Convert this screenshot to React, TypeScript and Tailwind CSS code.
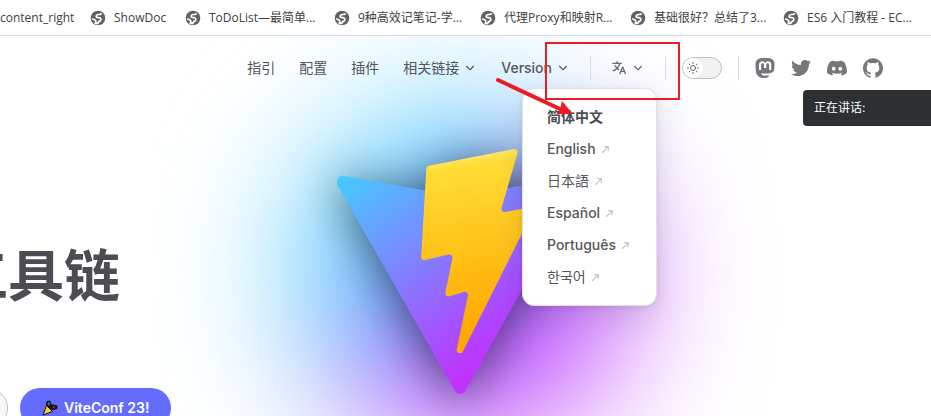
import { SiMastodon, SiDiscord, SiGithub } from "react-icons/si";
import { FaTwitter } from "react-icons/fa";

const bookmarks = [
  { label: "ShowDoc", width: "w-[95px]" },
  { label: "ToDoList—最简单...", width: "w-[149px]" },
  { label: "9种高效记笔记-学...", width: "w-[146px]" },
  { label: "代理Proxy和映射R...", width: "w-[150px]" },
  { label: "基础很好？总结了3...", width: "w-[153px]" },
  { label: "ES6 入门教程 - EC...", width: "w-[150px]" },
];

const languages = [
  { label: "English", weight: "font-medium" },
  { label: "日本語", weight: "font-normal" },
  { label: "Español", weight: "font-medium" },
  { label: "Português", weight: "font-medium" },
  { label: "한국어", weight: "font-normal" },
];

function Globe() {
  return (
    <svg viewBox="0 0 16 16" className="size-4 shrink-0" aria-hidden="true">
      <circle cx="8" cy="8" r="7.3" fill="#5f6368" />
      <path
        d="M11.6 3.2C11.2 4.4 10 4.6 8.8 4.5 7.4 4.4 6.2 5 6.2 6.2 6.2 7.4 7.2 7.6 8.6 7.6 10.2 7.6 11 8.6 10.8 9.9 10.6 11.2 9.4 11.2 8.6 11.8 8 12.3 8 13 7.6 13.6L5.4 13.2C6 12.2 6 11.4 5.6 10.6 5.1 9.7 3.6 9.6 2.2 8.6"
        fill="none"
        stroke="#fff"
        strokeWidth="1.7"
      />
    </svg>
  );
}

function Chevron() {
  return (
    <svg viewBox="0 0 24 24" className="size-3.5" fill="currentColor" aria-hidden="true">
      <path d="M12,16c-0.3,0-0.5-0.1-0.7-0.3l-6-6c-0.4-0.4-0.4-1,0-1.4s1-0.4,1.4,0l5.3,5.3l5.3-5.3c0.4-0.4,1-0.4,1.4,0s0.4,1,0,1.4l-6,6C12.5,15.9,12.3,16,12,16z" />
    </svg>
  );
}

function Translate() {
  return (
    <svg viewBox="0 0 24 24" className="size-4" fill="currentColor" aria-hidden="true">
      <path d="M18.5 10l4.4 11h-2.155l-1.201-3h-4.09l-1.199 3h-2.154L16.5 10h2zM10 2v2h6v2h-1.968a18.222 18.222 0 0 1-3.62 6.301 14.864 14.864 0 0 0 2.336 1.707l-.751 1.878A17.015 17.015 0 0 1 9 13.725a16.676 16.676 0 0 1-6.201 3.548l-.536-1.929a14.7 14.7 0 0 0 5.327-3.042A18.078 18.078 0 0 1 4.767 8h2.24A16.032 16.032 0 0 0 9 10.877a16.165 16.165 0 0 0 2.91-4.876L2 6V4h6V2h2zm7.5 10.885L16.253 16h2.492L17.5 12.885z" />
    </svg>
  );
}

function ExternalArrow() {
  return (
    <svg viewBox="0 0 24 24" className="size-[11px]" fill="#b4b4b8" aria-hidden="true">
      <path d="M9 5v2h6.59L4 18.59 5.41 20 17 8.41V15h2V5z" />
    </svg>
  );
}

function Sun() {
  return (
    <svg viewBox="0 0 24 24" className="size-3" fill="none" stroke="#67676c" strokeWidth="2" strokeLinecap="round" aria-hidden="true">
      <circle cx="12" cy="12" r="5" />
      <path d="M12 1v2M12 21v2M1 12h2M21 12h2M4.2 4.2l1.4 1.4M18.4 18.4l1.4 1.4M4.2 19.8l1.4-1.4M18.4 5.6l1.4-1.4" />
    </svg>
  );
}

function Popper() {
  return (
    <svg viewBox="0 0 16 16" className="size-4" aria-hidden="true">
      <path d="M5 1.500 8 1 9 4.500 11 5 15 6 15 8.500 12 9.500 8 9 4.500 5.500z" fill="#1a1414" stroke="#111" strokeWidth="1" strokeLinejoin="round" />
      <path d="M10 6.500 13.500 6.800 11.500 8.500z" fill="#b3372f" />
      <path d="M5.500 3 7.500 2 8 5 6.500 5.500z" fill="#1695a3" />
      <path d="M4.500 5.500 1 15 10.500 11.500z" fill="#ffc83d" stroke="#111" strokeWidth="1" strokeLinejoin="round" />
    </svg>
  );
}

function Logo() {
  return (
    <svg
      viewBox="0 0 410 404"
      className="relative h-auto w-64 overflow-visible drop-shadow-[0_6px_24px_rgba(0,0,0,0.55)]"
      role="img"
      aria-label="Vite"
    >
      <defs>
        <linearGradient id="tri" x1="6" y1="33" x2="235" y2="344" gradientUnits="userSpaceOnUse">
          <stop stopColor="#41D1FF" />
          <stop offset="1" stopColor="#BD34FE" />
        </linearGradient>
        <linearGradient id="bolt" x1="194.651" y1="8.818" x2="236.076" y2="292.989" gradientUnits="userSpaceOnUse">
          <stop stopColor="#FFEA83" />
          <stop offset="0.083" stopColor="#FFDD35" />
          <stop offset="1" stopColor="#FFA800" />
        </linearGradient>
      </defs>
      <path
        d="M399.641 59.5246L215.643 388.545C211.844 395.338 202.084 395.378 198.228 388.618L10.5817 59.5563C6.38087 52.1896 12.6802 43.2665 21.0281 44.7586L205.223 77.6824C206.398 77.8924 207.601 77.8904 208.776 77.6763L389.119 44.8058C397.439 43.2894 403.768 52.1434 399.641 59.5246Z"
        fill="url(#tri)"
      />
      <path
        d="M292.965 1.5744L156.801 28.2552C154.563 28.6937 152.906 30.5903 152.771 32.8664L144.395 174.33C144.198 177.662 147.258 180.248 150.51 179.498L188.42 170.749C191.967 169.931 195.172 173.055 194.443 176.622L183.18 231.775C182.422 235.487 185.907 238.661 189.532 237.56L212.947 230.446C216.577 229.344 220.065 232.527 219.297 236.242L201.398 322.875C200.278 328.294 207.486 331.249 210.492 326.603L212.5 323.5L323.454 102.072C325.312 98.3645 322.108 94.137 318.036 94.9228L279.014 102.454C275.347 103.161 272.227 99.746 273.262 96.1583L298.731 7.86689C299.767 4.27314 296.636 0.855181 292.965 1.5744Z"
        fill="url(#bolt)"
      />
    </svg>
  );
}

function Divider() {
  return <span className="h-6 w-px shrink-0 bg-[#dcdce2]" />;
}

export default function App() {
  return (
    <div className="relative h-screen overflow-hidden bg-white font-['Inter','Noto_Sans_CJK_SC','Noto_Sans_CJK_KR',sans-serif] text-sm text-[#55555b]">
      <div className="flex h-full flex-col">
        <nav
          aria-label="Bookmarks"
          className="relative z-10 flex h-9 shrink-0 items-center border-b border-[#d5d9e0] bg-white font-['Open_Sans','Noto_Sans_CJK_SC',sans-serif] text-xs text-[#3c4043]"
        >
          <a href="#content" className="w-[90px] shrink-0 whitespace-nowrap">content_right</a>
          {bookmarks.map((b) => (
            <a key={b.label} href="#bookmark" className={"flex shrink-0 items-center gap-2 whitespace-nowrap " + b.width}>
              <Globe />
              {b.label}
            </a>
          ))}
        </nav>

        <header className="relative z-10 flex h-16 shrink-0 items-center justify-end pr-12">
          <nav className="flex items-center gap-6" aria-label="Main">
            <a href="#guide">指引</a>
            <a href="#config">配置</a>
            <a href="#plugins">插件</a>
            <button className="flex items-center gap-1">相关链接 <Chevron /></button>
            <button className="flex items-center gap-1 font-medium">Version <Chevron /></button>
          </nav>
          <div className="ml-5 flex items-center">
            <Divider />
            <div className="relative px-5">
              <button className="flex items-center gap-1 text-[#67676c]" aria-label="Change language" aria-expanded="true">
                <Translate />
                <Chevron />
              </button>
              <div className="absolute top-7 -right-[-8px] w-[135px] rounded-xl border border-[#e2e2e3] bg-white px-6 py-3 shadow-[0_12px_32px_rgba(0,0,0,0.1),0_2px_6px_rgba(0,0,0,0.08)]">
                <p className="leading-8 font-bold text-[#4c4c52]">简体中文</p>
                {languages.map((l) => (
                  <a key={l.label} href="#lang" className={"flex items-center gap-1 leading-8 " + l.weight}>
                    {l.label}
                    <ExternalArrow />
                  </a>
                ))}
              </div>
            </div>
            <Divider />
            <button
              role="switch"
              aria-checked="false"
              aria-label="Toggle dark mode"
              className="mx-4 flex h-[22px] w-10 items-center rounded-full border border-[#c2c2c4] bg-[#f2f2f3]"
            >
              <span className="flex size-5 items-center justify-center rounded-full bg-white">
                <Sun />
              </span>
            </button>
            <Divider />
            <div className="ml-4 flex items-center gap-4 text-xl text-[#76767b]">
              <a href="#mastodon" aria-label="Mastodon"><SiMastodon /></a>
              <a href="#twitter" aria-label="Twitter"><FaTwitter /></a>
              <a href="#discord" aria-label="Discord"><SiDiscord /></a>
              <a href="#github" aria-label="GitHub"><SiGithub /></a>
            </div>
          </div>
        </header>

        <main className="flex flex-1">
          <section className="flex w-[300px] shrink-0 flex-col pt-[136px]">
            <h1 className="-ml-12 text-[56px] leading-20 font-bold whitespace-nowrap text-[#4c4c52]">工具链</h1>
            <div className="mt-[72px] -ml-8 flex gap-3">
              <button aria-label="GitHub" className="h-10 w-10 shrink-0 rounded-full border border-[#c2c2c4] bg-[#f6f6f7]" />
              <button className="flex h-10 items-center gap-1.5 rounded-full bg-[#646cff] px-[22px] font-semibold text-white">
                <Popper />
                ViteConf 23!
              </button>
            </div>
          </section>
          <section className="relative w-[320px] shrink-0 pt-12 pl-[31px]">
            <div className="absolute top-4 left-0 size-80 rounded-full bg-[linear-gradient(-45deg,#bd34fe_50%,#47caff_50%)] blur-[72px]" />
            <Logo />
          </section>
        </main>
      </div>

      <div className="absolute top-[90px] right-0 z-20 flex h-9 w-32 items-center rounded-l bg-[#2c3033] px-[11px] text-xs text-white">
        正在讲话:
      </div>

      <svg className="pointer-events-none absolute top-10 left-[490px] z-30 h-20 w-[200px]" viewBox="0 0 200 80" aria-hidden="true">
        <rect x="56" y="3" width="133" height="56" fill="none" stroke="#ed1c24" strokeWidth="2" />
        <path d="M8 40 70 69" stroke="#ed1c24" strokeWidth="4" strokeLinecap="round" />
        <path d="M72 61 83 74 67 74 70 69z" fill="#ed1c24" />
      </svg>
    </div>
  );
}
